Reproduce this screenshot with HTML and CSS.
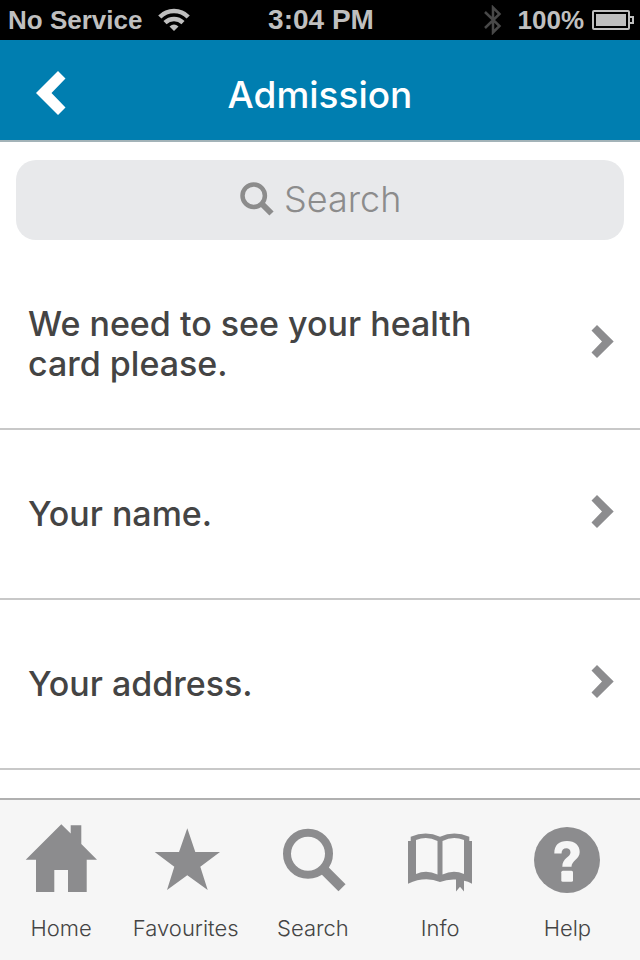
FILE: index.html
```html
<!DOCTYPE html>
<html lang="en">
<head>
  <meta charset="UTF-8">
  <meta name="viewport" content="width=device-width, initial-scale=1">
  <title>Admission</title>
  <link rel="stylesheet" href="styles.css">
</head>
<body>
  <div class="status-bar">
    <div class="status-left">
      <span>No Service</span>
      <svg width="32" height="24" viewBox="0 0 32 24" fill="none" stroke="currentColor" stroke-width="4.500">
        <path d="M1.800 9 A20 20 0 0 1 30.200 9"/>
        <path d="M7 14.700 A13 13 0 0 1 25 14.700"/>
        <path d="M11.500 18.500 Q16 14.500 20.500 18.500 L16 23z" fill="currentColor" stroke="none"/>
      </svg>
    </div>
    <span class="status-time">3:04 PM</span>
    <div class="status-right">
      <svg class="bluetooth" width="18" height="30" viewBox="0 0 18 30" fill="none" stroke="currentColor" stroke-width="2.500">
        <path d="M1 7 L15.500 21 L9 27.500 V2.500 L15.500 9 L1 23"/>
      </svg>
      <span>100%</span>
      <svg width="42" height="20" viewBox="0 0 42 20" fill="none" stroke="currentColor" stroke-width="2">
        <rect x="1" y="1" width="36" height="18" rx="1"/>
        <path d="M38 7 H41 V13 H38"/>
        <rect x="4" y="4" width="30" height="12" fill="currentColor" stroke="none"/>
      </svg>
    </div>
  </div>

  <header class="header">
    <button type="button" class="back" aria-label="Back">
      <svg width="30" height="44" viewBox="0 0 30 44" fill="currentColor">
        <path d="M22 0 L29.500 7.500 L15.500 22 L29.500 36.500 L22 44 L0 22z"/>
      </svg>
    </button>
    <h1>Admission</h1>
  </header>

  <main>
    <label class="search-box">
      <svg width="34" height="34" viewBox="0 0 34 34" fill="none" stroke="currentColor">
        <circle cx="13.700" cy="13.700" r="11.200" stroke-width="4.500"/>
        <path d="M21.500 21.500 L31.500 31.500" stroke-width="6"/>
      </svg>
      <input type="text" placeholder="Search" aria-label="Search">
    </label>

    <ul class="phrases">
      <li>
        <a href="#health-card">
          <span>We need to see your health card please.</span>
          <svg width="23" height="33" viewBox="0 0 23 33" fill="currentColor"><path d="M6 0 L22.700 16.500 L6 33 L.5 27.500 L11 16.500 L.5 5.500z"/></svg>
        </a>
      </li>
      <li>
        <a href="#name">
          <span>Your name.</span>
          <svg width="23" height="33" viewBox="0 0 23 33" fill="currentColor"><path d="M6 0 L22.700 16.500 L6 33 L.5 27.500 L11 16.500 L.5 5.500z"/></svg>
        </a>
      </li>
      <li>
        <a href="#address">
          <span>Your address.</span>
          <svg width="23" height="33" viewBox="0 0 23 33" fill="currentColor"><path d="M6 0 L22.700 16.500 L6 33 L.5 27.500 L11 16.500 L.5 5.500z"/></svg>
        </a>
      </li>
    </ul>
  </main>

  <nav class="tabs">
    <a href="#home">
      <svg width="72" height="70" viewBox="0 0 72 70" fill="currentColor">
        <path d="M36.300 .3 L45.700 9.500 V1.200 H56.300 V20 L72 35.700 H61.700 V68 H43 V46 H29.300 V68 H11 V35.700 H.7z"/>
      </svg>
      <span>Home</span>
    </a>
    <a href="#favourites">
      <svg width="72" height="70" viewBox="0 0 72 70" fill="currentColor">
        <path d="M37.300 4.300 L45.300 28 H70 L50.300 42.700 L57.700 66 L37.300 51.300 L17 66 L24.300 42.700 L4.700 28 H29z"/>
      </svg>
      <span>Favourites</span>
    </a>
    <a href="#search">
      <svg width="72" height="70" viewBox="0 0 72 70" fill="none" stroke="currentColor">
        <circle cx="31" cy="29.700" r="21" stroke-width="8"/>
        <path d="M45 43.700 L65 63.700" stroke-width="10"/>
      </svg>
      <span>Search</span>
    </a>
    <a href="#info">
      <svg width="72" height="70" viewBox="0 0 72 70" fill="currentColor" fill-rule="evenodd">
        <path d="M4 17 H6.700 V12.700 Q22 6.500 36 12.700 Q50 6.500 65.300 12.700 V17 H68 V59.700 Q64 57.500 60 56.800 V67.500 L56 62.700 L52 67.500 V55.500 Q43 55 36 58 Q21 52 4 59.700z
          M12 16 V50 Q22.500 45.500 33.500 50.500 V17 Q23 11.500 12 16z
          M38.500 17 V50.500 Q49.500 45.500 60 50 V16 Q49 11.500 38.500 17z"/>
      </svg>
      <span>Info</span>
    </a>
    <a href="#help">
      <svg width="72" height="70" viewBox="0 0 72 70">
        <circle cx="36" cy="36" r="33" fill="currentColor"/>
        <path class="mark" d="M23.300 29.500 C23.300 21 28 17 36 17 C44 17 48.700 21.500 48.700 28 C48.700 35.500 40.500 36.500 40.500 42.800 H31.300 C31.300 34 39.500 33 39.500 28.500 C39.500 25.500 37.500 24.300 35.500 24.300 C32.500 24.300 30.500 26 30.500 29.500z"/>
        <rect class="mark" x="30.300" y="46.700" width="11.700" height="11" rx="1.500"/>
      </svg>
      <span>Help</span>
    </a>
  </nav>
</body>
</html>
```
FILE: styles.css
```css
* {
  box-sizing: border-box;
}

body {
  margin: 0;
  min-height: 100vh;
  display: flex;
  flex-direction: column;
  background-color: #fff;
  color: #444;
  font-family: Inter, "Liberation Sans", sans-serif;
}

svg {
  display: block;
  flex-shrink: 0;
}

a {
  color: inherit;
  text-decoration: none;
}

.status-bar {
  display: grid;
  grid-template-columns: 1fr auto 1fr;
  align-items: center;
  height: 40px;
  padding: 0 6px 0 8px;
  background-color: #000;
  color: #bfbfbf;
  font: bold 26px/40px "Liberation Sans", Arial, sans-serif;
}

.status-left,
.status-right {
  display: flex;
  align-items: center;
}

.status-left {
  gap: 16px;
}

.status-right {
  justify-content: flex-end;
  gap: 8px;
}

.status-time {
  font-size: 28px;
}

.bluetooth {
  margin-right: 8px;
  color: #484848;
}

.header {
  display: grid;
  grid-template-columns: 1fr auto 1fr;
  align-items: center;
  height: 102px;
  padding: 6px 36px 0;
  background-color: #007eb0;
  border-bottom: 2px solid #a3b3b8;
  color: #fff;
}

.back {
  justify-self: start;
  padding: 0;
  border: none;
  background: none;
  color: inherit;
  cursor: pointer;
}

h1 {
  margin: 0;
  padding-top: 4px;
  font-size: 37px;
  font-weight: 500;
  line-height: 44px;
}

main {
  flex: 1;
  padding-top: 18px;
}

.search-box {
  display: flex;
  justify-content: center;
  align-items: center;
  gap: 10px;
  height: 80px;
  margin: 0 16px 20px;
  padding-bottom: 2px;
  border-radius: 20px;
  background-color: #e8e9eb;
  color: #8c8c8c;
}

.search-box input {
  width: 116px;
  padding: 0;
  border: none;
  outline: none;
  background: none;
  color: inherit;
  font: 300 36px/44px Inter, sans-serif;
}

.search-box input::placeholder {
  color: inherit;
  opacity: 1;
}

.phrases {
  margin: 0;
  padding: 0;
  list-style: none;
}

.phrases li {
  border-bottom: 2px solid #c8c8c8;
}

.phrases a {
  display: flex;
  justify-content: space-between;
  align-items: center;
  gap: 80px;
  min-height: 168px;
  padding: 0 26px 6px 28px;
  font-size: 34px;
  font-weight: 500;
  line-height: 40px;
}

.phrases span {
  padding-top: 6px;
}

.phrases svg {
  color: #8c8c8e;
}

.tabs {
  display: grid;
  grid-template-columns: 24fr repeat(4, 25fr);
  padding: 24px 9px 18px 0;
  border-top: 2px solid #b0b0b0;
  background-color: #f6f6f6;
}

.tabs a {
  display: flex;
  flex-direction: column;
  align-items: center;
  gap: 20px;
  font-size: 22px;
  font-weight: 300;
  line-height: 28px;
}

.tabs svg {
  color: #8c8c8e;
}

.tabs .mark {
  fill: #f6f6f6;
}
```
